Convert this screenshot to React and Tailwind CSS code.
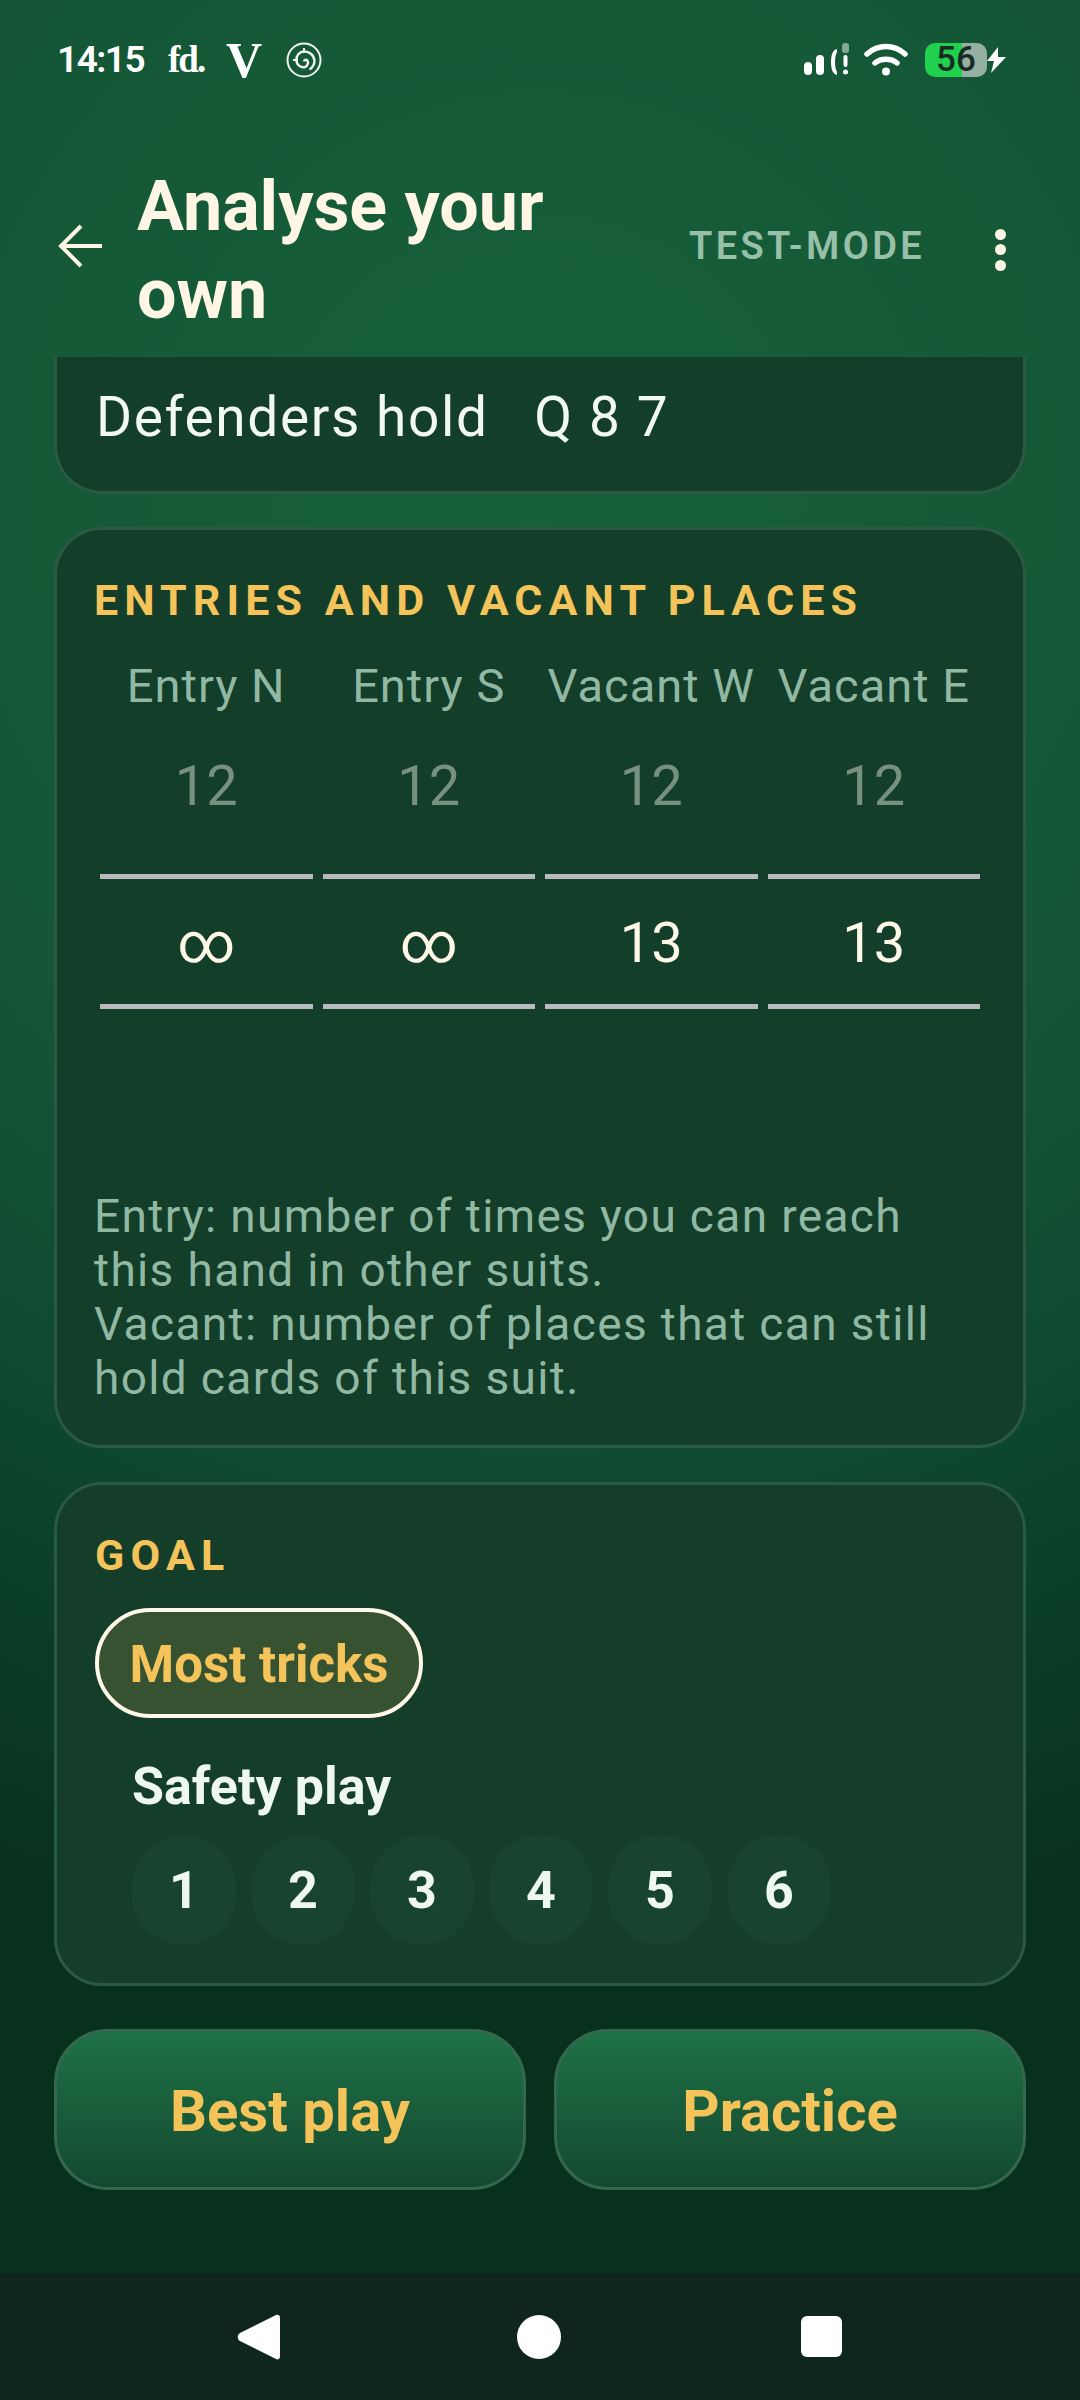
const COLS = [
  { label: 'Entry N', value: '∞' },
  { label: 'Entry S', value: '∞' },
  { label: 'Vacant W', value: '13' },
  { label: 'Vacant E', value: '13' },
]

function StatusBar() {
  return (
    <div className="h-[100px] pt-[40px] pl-[57px] pr-[72px] flex items-start justify-between shrink-0">
      <div className="flex items-center h-[40px]">
        <span className="text-[37px] leading-[40px] font-semibold tracking-[-1.500px] text-white w-[111px]">14:15</span>
        <span className="font-['Liberation_Serif',serif] font-bold text-[37px] leading-[40px] tracking-[-2px] text-white w-[58px]">fd.</span>
        <span className="font-['Liberation_Serif',serif] font-bold text-[50px] leading-[40px] text-white w-[59px]">V</span>
        <svg width="38" height="38" viewBox="0 0 38 38" fill="none" stroke="#eef5ef" strokeWidth="2">
          <circle cx="19" cy="19" r="16.5" />
          <path d="M19 20.5a2 2 0 0 1 3-1.5 4.5 4.5 0 0 1-2 7 7 7 0 0 1-8.500-7 8 8 0 0 1 7-8.500 10 10 0 0 1 11 9 11 11 0 0 1-5 9" strokeWidth="2.400" />
          <path d="M19 7v5M8 19h5" strokeWidth="2" />
        </svg>
      </div>
      <div className="flex items-center h-[36px] mt-[2px]">
        <svg width="46" height="34" viewBox="0 0 46 34" fill="white" className="mr-[14px]">
          <rect x="0" y="19" width="8" height="13" rx="4" />
          <rect x="12" y="12" width="8" height="20" rx="4" />
          <path d="M33 6c-4 1-6 5-6 13s2 12 6 13v-3c-1-2-2-5-2-10s1-8 2-10z" />
          <rect x="38" y="0" width="7" height="10" rx="3" fill="#82a997" />
          <rect x="39.500" y="12" width="4" height="12" rx="2" />
          <circle cx="41.500" cy="29" r="2.500" />
        </svg>
        <svg width="44" height="34" viewBox="0 0 44 34" fill="none" stroke="white" strokeWidth="5.500" strokeLinecap="round" className="mr-[17px]">
          <path d="M3 11C14 1 30 1 41 11" />
          <path d="M11 20c6-5 16-5 22 0" />
          <circle cx="22" cy="28.500" r="4" fill="white" stroke="none" />
        </svg>
        <div className="w-[62px] h-[34px] rounded-[10px] bg-[linear-gradient(90deg,#1fd14c_37px,#95b0a2_37px)] flex items-center justify-center">
          <span className="text-[35px] leading-[34px] font-medium text-[#1b2b24]">56</span>
        </div>
        <svg width="24" height="28" viewBox="0 0 24 28" className="-ml-[3px]">
          <path d="M14 1 3 15h7l-3 12L22 11h-8z" fill="white" />
        </svg>
      </div>
    </div>
  )
}

function Header() {
  return (
    <div className="h-[257px] pt-[42px] pl-[58px] pr-[88px] flex items-center shrink-0">
      <svg width="44" height="44" viewBox="0 0 44 44" fill="none" stroke="#fff6e6" strokeWidth="4" className="shrink-0 mt-[-8px]">
        <path d="M44 22H3M23 2 3 22l20 20" />
      </svg>
      <h1 className="ml-[35px] w-[440px] text-[70px] leading-[88px] font-bold text-[#fff6e6]">Analyse your own</h1>
      <span className="ml-[112px] text-[38px] font-semibold tracking-[3.300px] text-[#98c0a9] mt-[-6px]">TEST-MODE</span>
      <div className="ml-auto mr-[-14px] flex flex-col gap-[4.500px]">
        <div className="w-[11px] h-[11px] rounded-full bg-[#fff6e6]" />
        <div className="w-[11px] h-[11px] rounded-full bg-[#fff6e6]" />
        <div className="w-[11px] h-[11px] rounded-full bg-[#fff6e6]" />
      </div>
    </div>
  )
}

function EntriesCard() {
  return (
    <div className="h-[921px] rounded-[48px] border-[3px] border-[#2a5a42] bg-[#133e29] pt-[46px] px-[37px]">
      <h2 className="text-[43px] leading-[48px] font-bold tracking-[6.100px] text-[#f4c45a]">ENTRIES AND VACANT PLACES</h2>
      <div className="grid grid-cols-4 gap-x-[10px] mt-[32px] pl-[6px] w-[886px]">
        {COLS.map(c => (
          <div key={c.label} className="flex flex-col items-center">
            <span className="h-[60px] text-[47px] leading-[60px] tracking-[1px] text-[#90b8a2] whitespace-nowrap">{c.label}</span>
            <div className="w-full h-[140px] mt-[20px] flex items-start justify-center">
              <span className="text-[56px] leading-[100px] text-[#78917f]">12</span>
            </div>
            <div className="w-full h-[161px] flex flex-col">
              <div className="h-[5px] bg-[#b9b9c0] mt-[-2px]" />
              <div className="h-[125px] pt-[3px] flex items-center justify-center text-[56px] text-[#fff8e8]">{c.value}</div>
              <div className="h-[5px] bg-[#b9b9c0]" />
            </div>
          </div>
        ))}
      </div>
      <p className="mt-[152px] text-[46px] leading-[54px] tracking-[1.350px] text-[#90b8a2] whitespace-nowrap">
        Entry: number of times you can reach<br />
        this hand in other suits.<br />
        Vacant: number of places that can still<br />
        hold cards of this suit.
      </p>
    </div>
  )
}

function GoalCard() {
  return (
    <div className="h-[504px] rounded-[48px] border-[3px] border-[#2a5a42] bg-[#143e2a] pt-[46px] px-[38px]">
      <h2 className="text-[43px] leading-[48px] font-bold tracking-[6.200px] text-[#f4c45a]">GOAL</h2>
      <div className="mt-[29px] w-[328px] h-[110px] rounded-full border-[4px] border-[#fff8e8] bg-[#365231] flex items-center justify-center">
        <span className="text-[51px] font-bold text-[#f4c45a] mt-[4px]">Most tricks</span>
      </div>
      <div className="pl-[37px]">
        <p className="mt-[39px] text-[52px] leading-[60px] font-bold text-[#eef7f0]">Safety play</p>
        <div className="mt-[18px] flex gap-[15px]">
          {[1, 2, 3, 4, 5, 6].map(n => (
            <div key={n} className="w-[104px] h-[110px] pt-[2px] rounded-full bg-[#18432e] flex items-center justify-center text-[52px] font-bold text-[#eef7f0]">{n}</div>
          ))}
        </div>
      </div>
    </div>
  )
}

function ActionButton({ children }) {
  return (
    <button className="flex-1 h-[161px] pt-[4px] rounded-[54px] border-[3px] border-[#34674b] bg-gradient-to-b from-[#1e7147] to-[#14492f] text-[58px] font-bold text-[#f4c45a]">
      {children}
    </button>
  )
}

export default function App() {
  return (
    <div className="w-[1080px] h-[2400px] flex flex-col overflow-hidden font-[Roboto,sans-serif] bg-[radial-gradient(circle_at_50%_20%,#17603a_0px,#145636_700px,#0f4a30_1000px,#0b3d26_1250px,#08311d_1500px)]">
      <StatusBar />
      <Header />
      <main className="flex-1 px-[54px] flex flex-col">
        <div className="h-[137px] rounded-b-[48px] border-[3px] border-t-0 border-[#2a5a42] bg-[#133e29] pl-[39px] pt-[30px] shrink-0">
          <p className="text-[55px] leading-[60px] tracking-[1.600px] text-[#f2f9f3] whitespace-pre">Defenders hold   Q 8 7</p>
        </div>
        <div className="mt-[33px]"><EntriesCard /></div>
        <div className="mt-[34px]"><GoalCard /></div>
        <div className="mt-[43px] flex gap-[28px]">
          <ActionButton>Best play</ActionButton>
          <ActionButton>Practice</ActionButton>
        </div>
      </main>
      <nav className="h-[127px] shrink-0 bg-[#0f2620] flex items-center">
        <div className="w-full flex items-center pl-[237px]">
          <svg width="44" height="46" viewBox="0 0 44 46" fill="white">
            <path d="M39 1c2-1 4 0 4 3v38c0 3-2 4-4 3L3 27c-3-2-3-6 0-8z" />
          </svg>
          <div className="ml-[236px] w-[44px] h-[44px] rounded-full bg-white" />
          <div className="ml-[240px] w-[41px] h-[41px] rounded-[6px] bg-white" />
        </div>
      </nav>
    </div>
  )
}
